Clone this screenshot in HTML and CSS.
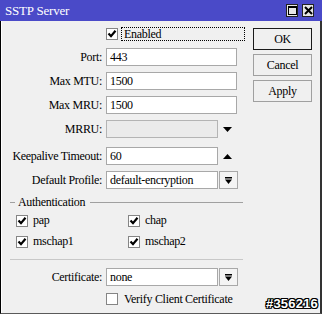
FILE: index.html
```html
<!DOCTYPE html>
<html>
<head>
<meta charset="utf-8">
<link rel="stylesheet" href="styles.css">
</head>
<body>
<div class="window">
  <div class="titlebar">
    <span class="title">SSTP Server</span>
    <div class="tb-buttons">
      <span class="tb-btn"><svg width="9" height="9" viewBox="0 0 9 9"><rect x="0.5" y="0.5" width="8" height="8" fill="none" stroke="#000"/><rect x="0" y="0" width="9" height="2" fill="#000"/></svg></span>
      <span class="tb-btn"><svg width="9" height="9" viewBox="0 0 9 9"><path d="M1 1 L8 8 M8 1 L1 8" stroke="#000" stroke-width="2"/></svg></span>
    </div>
  </div>
  <div class="content">
    <div class="form">
      <div class="row check-row enabled-row">
        <span class="cbox"><svg width="10" height="10" viewBox="0 0 10 10"><path d="M1.5 4.5 L4 7.2 L8.5 1.8" fill="none" stroke="#000" stroke-width="2.2"/></svg></span>
        <span class="focus">Enabled</span>
      </div>
      <div class="row field-row gap7">
        <span class="label">Port:</span><span class="field">443</span>
      </div>
      <div class="row field-row gap6">
        <span class="label">Max MTU:</span><span class="field">1500</span>
      </div>
      <div class="row field-row gap6">
        <span class="label">Max MRU:</span><span class="field">1500</span>
      </div>
      <div class="row field-row gap6">
        <span class="label">MRRU:</span><span class="field short disabled"></span>
        <span class="icon-slot"><svg width="9" height="5" viewBox="0 0 9 5"><path d="M0 0 H9 L4.5 5 Z" fill="#000"/></svg></span>
      </div>
      <div class="row field-row gap9">
        <span class="label">Keepalive Timeout:</span><span class="field short">60</span>
        <span class="icon-slot"><svg width="9" height="5" viewBox="0 0 9 5"><path d="M0 5 H9 L4.5 0 Z" fill="#000"/></svg></span>
      </div>
      <div class="row field-row gap6">
        <span class="label">Default Profile:</span><span class="field short">default-encryption</span>
        <span class="drop-btn"><svg width="7" height="7" viewBox="0 0 7 7"><rect x="0" y="0" width="7" height="1.5" fill="#000"/><path d="M0 2.5 H7 L3.5 7 Z" fill="#000"/></svg></span>
      </div>
      <div class="group-head">
        <span class="line-short"></span><span class="group-title">Authentication</span><span class="line-long"></span>
      </div>
      <div class="check-grid first">
        <div class="check-item"><span class="cbox"><svg width="10" height="10" viewBox="0 0 10 10"><path d="M1.5 4.5 L4 7.2 L8.5 1.8" fill="none" stroke="#000" stroke-width="2.2"/></svg></span><span>pap</span></div>
        <div class="check-item"><span class="cbox"><svg width="10" height="10" viewBox="0 0 10 10"><path d="M1.5 4.5 L4 7.2 L8.5 1.8" fill="none" stroke="#000" stroke-width="2.2"/></svg></span><span>chap</span></div>
      </div>
      <div class="check-grid second">
        <div class="check-item"><span class="cbox"><svg width="10" height="10" viewBox="0 0 10 10"><path d="M1.5 4.5 L4 7.2 L8.5 1.8" fill="none" stroke="#000" stroke-width="2.2"/></svg></span><span>mschap1</span></div>
        <div class="check-item"><span class="cbox"><svg width="10" height="10" viewBox="0 0 10 10"><path d="M1.5 4.5 L4 7.2 L8.5 1.8" fill="none" stroke="#000" stroke-width="2.2"/></svg></span><span>mschap2</span></div>
      </div>
      <div class="separator"></div>
      <div class="row field-row gap8">
        <span class="label">Certificate:</span><span class="field short">none</span>
        <span class="drop-btn"><svg width="7" height="7" viewBox="0 0 7 7"><rect x="0" y="0" width="7" height="1.5" fill="#000"/><path d="M0 2.5 H7 L3.5 7 Z" fill="#000"/></svg></span>
      </div>
      <div class="row check-row verify-row">
        <span class="cbox"></span>
        <span class="check-text">Verify Client Certificate</span>
      </div>
    </div>
    <div class="buttons">
      <div class="btn default">OK</div>
      <div class="btn">Cancel</div>
      <div class="btn">Apply</div>
    </div>
  </div>
  <div class="watermark">#356216</div>
</div>
</body>
</html>
```
FILE: styles.css
```css
html, body {
  margin: 0;
  padding: 0;
  background: #ffffff;
}
body {
  font-family: "Liberation Serif", "Times New Roman", serif;
  font-size: 12px;
  letter-spacing: -0.3px;
  color: #000;
}
.window {
  position: relative;
  width: 322px;
  height: 314px;
  display: flex;
  flex-direction: column;
}
.titlebar {
  height: 21px;
  flex: none;
  background: #4a4ac8;
  color: #fff;
  display: flex;
  align-items: center;
  padding: 0 8px 0 5px;
  font-family: "Liberation Serif", "Times New Roman", serif;
  font-size: 13px;
  letter-spacing: -0.2px;
}
.title {
  flex: 1;
}
.tb-buttons {
  display: flex;
  gap: 4px;
}
.tb-btn {
  width: 10px;
  height: 11px;
  border: 1px solid #222;
  background: #e6e6e6;
  display: flex;
  align-items: center;
  justify-content: center;
}
.content {
  flex: 1;
  display: flex;
  background: #f0f0f0;
  border-left: 1px solid #000;
  border-right: 2px solid #333;
  border-bottom: 1px solid #5a5a5a;
  box-shadow: inset 1px 0 0 #ffffff;
}
.form {
  width: 236px;
  padding: 6px 0 0 7px;
  display: flex;
  flex-direction: column;
}
.row {
  display: flex;
  align-items: center;
}
.check-row {
  height: 14px;
  padding-left: 98px;
}
.cbox {
  box-sizing: border-box;
  width: 12px;
  height: 12px;
  border: 1px solid #858585;
  background: #fff;
  display: flex;
  align-items: center;
  justify-content: center;
  flex: none;
}
.focus {
  margin-left: 3px;
  height: 12px;
  line-height: 12px;
  flex: 1;
  border: 1px dotted #000;
  padding-left: 2px;
  margin-right: -1px;
}
.check-text {
  margin-left: 6px;
}
.field-row {
  height: 18px;
}
.gap6 { margin-top: 6px; }
.gap7 { margin-top: 7px; }
.gap8 { margin-top: 8px; }
.gap9 { margin-top: 9px; }
.label {
  width: 94px;
  text-align: right;
  margin-right: 4px;
  flex: none;
}
.field {
  box-sizing: border-box;
  width: 131px;
  height: 18px;
  line-height: 16px;
  border: 1px solid #a8a8a8;
  background: #fff;
  padding-left: 3px;
  flex: none;
}
.field.short {
  width: 112px;
}
.field.disabled {
  background: #ebebeb;
  border-color: #b4b4b4;
}
.icon-slot {
  width: 19px;
  display: flex;
  justify-content: center;
  flex: none;
}
.drop-btn {
  box-sizing: border-box;
  width: 19px;
  height: 18px;
  border: 1px solid #a8a8a8;
  background: #f4f4f4;
  display: flex;
  align-items: center;
  justify-content: center;
  flex: none;
  margin-left: 1px;
}
.group-head {
  margin-top: 6px;
  height: 14px;
  display: flex;
  align-items: center;
}
.line-short {
  width: 5px;
  margin-left: 2px;
  border-top: 1px solid #a0a0a0;
}
.group-title {
  padding: 0 5px 0 3px;
}
.line-long {
  flex: 1;
  border-top: 1px solid #a0a0a0;
  margin-right: 1px;
}
.check-grid {
  display: grid;
  grid-template-columns: 112px 1fr;
  padding-left: 8px;
  height: 13px;
}
.check-grid.first { margin-top: 4px; }
.check-grid.second { margin-top: 8px; }
.check-item {
  display: flex;
  align-items: center;
  gap: 5px;
}
.separator {
  margin: 12px 1px 0 2px;
  border-top: 1px solid #c8c8c8;
}
.verify-row {
  margin-top: 6px;
}
.buttons {
  margin-left: 9px;
  padding-top: 7px;
  width: 59px;
  display: flex;
  flex-direction: column;
  gap: 4px;
}
.btn {
  box-sizing: border-box;
  height: 22px;
  border: 1px solid #a0a0a0;
  background: #f0f0f0;
  text-align: center;
  line-height: 20px;
}
.btn.default {
  border-color: #1a1a1a;
}
.watermark {
  position: absolute;
  right: 4px;
  bottom: 3px;
  font-family: "Liberation Sans", Arial, sans-serif;
  font-weight: bold;
  font-size: 13px;
  letter-spacing: 0.2px;
  color: #fff;
  text-shadow: 1px 0 0 #000, -1px 0 0 #000, 0 1px 0 #000, 0 -1px 0 #000, 1px 1px 0 #000, -1px -1px 0 #000, 1px -1px 0 #000, -1px 1px 0 #000;
}
```
